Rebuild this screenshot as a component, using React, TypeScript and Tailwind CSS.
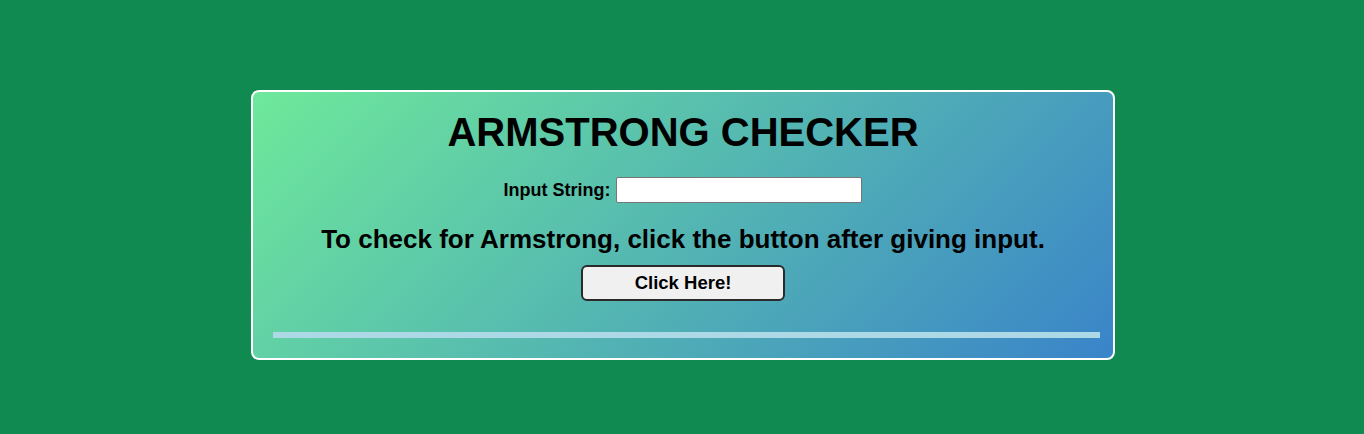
export default function App() {
  return (
    <div
      className="w-full h-[434px] bg-[#118a51] pt-[90px] pl-[2px]"
      style={{ fontFamily: '"Liberation Sans", Arial, sans-serif' }}
    >
      <div className="mx-auto w-[864px] h-[270px] rounded-[8px] border-2 border-white bg-[linear-gradient(135deg,#6ee99a,#3a84c9)] pt-[17px] pb-[20px] flex flex-col text-black">
        <h1 className="text-center text-[40px] leading-[46px] font-bold">ARMSTRONG CHECKER</h1>
        <div className="mt-[22px] flex items-center justify-center gap-[6px]">
          <label className="text-[18px] leading-[21px] font-bold">Input String:</label>
          <input
            type="text"
            className="w-[246px] h-[26px] bg-white border border-[#767676] rounded-[2px] px-1 text-[16px] outline-none"
          />
        </div>
        <p className="mt-[21px] text-center text-[26px] leading-[30px] font-bold">
          To check for Armstrong, click the button after giving input.
        </p>
        <div className="mt-[11px] flex justify-center">
          <button className="w-[204px] h-[36px] bg-[#f0f0f0] border-2 border-[#2a2a2a] rounded-[6px] text-[18.5px] leading-[22px] font-bold text-black">
            Click Here!
          </button>
        </div>
        <div className="mt-[31px] ml-[20px] w-[827px] h-[6px] bg-[#add8e6]" />
      </div>
    </div>
  );
}
